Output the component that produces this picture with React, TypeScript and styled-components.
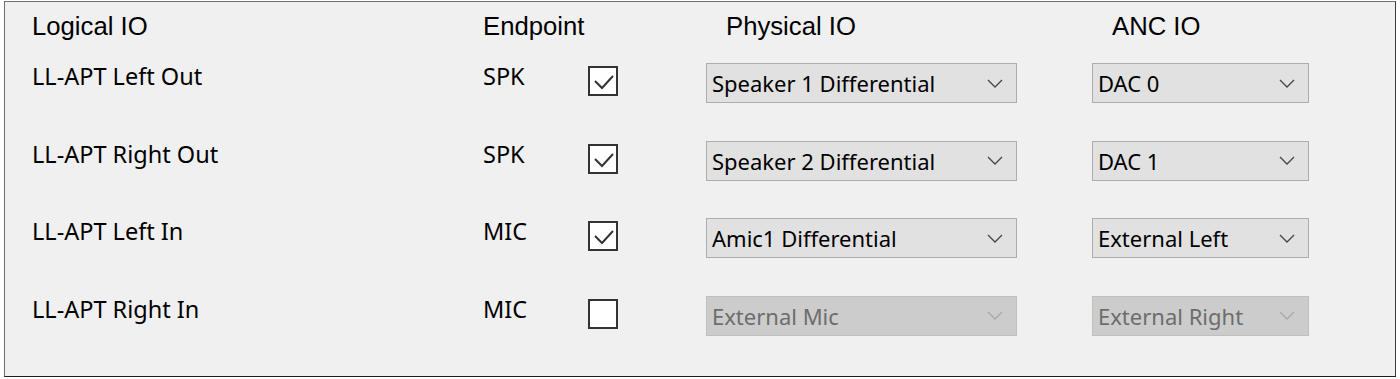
import React from 'react';
import styled, { createGlobalStyle } from 'styled-components';

type Mapping = {
    logical: string;
    endpoint: string;
    enabled: boolean;
    physical: string;
    anc: string;
}

const ROWS: Mapping[] = [
    { logical: 'LL-APT Left Out', endpoint: 'SPK', enabled: true, physical: 'Speaker 1 Differential', anc: 'DAC 0' },
    { logical: 'LL-APT Right Out', endpoint: 'SPK', enabled: true, physical: 'Speaker 2 Differential', anc: 'DAC 1' },
    { logical: 'LL-APT Left In', endpoint: 'MIC', enabled: true, physical: 'Amic1 Differential', anc: 'External Left' },
    { logical: 'LL-APT Right In', endpoint: 'MIC', enabled: false, physical: 'External Mic', anc: 'External Right' },
];

const COLUMNS = '451px 105px 118px 386px 217px';

const GlobalStyle = createGlobalStyle`
    html, body {
        margin: 0;
        padding: 0;
        background: #ffffff;
    }
`;

const Chevron = ({ disabled }: { disabled: boolean }) => (
    <svg width="16" height="9" viewBox="0 0 16 9">
        <polyline
            points="1,1 8,8 15,1"
            fill="none"
            stroke={disabled ? '#a8a8a8' : '#444444'}
            strokeWidth="1.3"
        />
    </svg>
);

const Check = () => (
    <svg width="26" height="26" viewBox="0 0 26 26">
        <polyline points="5,13 12,20 23,8" fill="none" stroke="#333333" strokeWidth="2" />
    </svg>
);

const App = () => {
    return (
        <>
            <GlobalStyle />
            <Frame>
                <HeaderRow>
                    <HeaderCell>Logical IO</HeaderCell>
                    <HeaderCell>Endpoint</HeaderCell>
                    <HeaderCell />
                    <HeaderCell $inset>Physical IO</HeaderCell>
                    <HeaderCell $inset>ANC IO</HeaderCell>
                </HeaderRow>
                <Rows>
                    {ROWS.map(row => (
                        <Row key={row.logical}>
                            <Label>{row.logical}</Label>
                            <Label>{row.endpoint}</Label>
                            <CheckBox>{row.enabled && <Check />}</CheckBox>
                            <Select $disabled={!row.enabled} $width={311}>
                                <span>{row.physical}</span>
                                <Chevron disabled={!row.enabled} />
                            </Select>
                            <Select $disabled={!row.enabled} $width={217}>
                                <span>{row.anc}</span>
                                <Chevron disabled={!row.enabled} />
                            </Select>
                        </Row>
                    ))}
                </Rows>
            </Frame>
        </>
    );
}

const Frame = styled.div`
    box-sizing: border-box;
    margin: 1px 0 0 4px;
    width: 1392px;
    height: 376px;
    background: #f0f0f0;
    border: 1px solid #6e6e6e;
    border-right-color: #3a3a3a;
    border-bottom-color: #1e1e1e;
    padding: 9px 0 0 27px;
    display: flex;
    flex-direction: column;
`;

const HeaderRow = styled.div`
    display: grid;
    grid-template-columns: ${COLUMNS};
    height: 30px;
`;

const HeaderCell = styled.div<{ $inset?: boolean }>`
    font-family: "Liberation Sans", Arial, sans-serif;
    font-size: 25.7px;
    line-height: 30px;
    color: #000000;
    white-space: nowrap;
    padding-left: ${props => props.$inset ? '20px' : '0'};
`;

const Rows = styled.div`
    display: flex;
    flex-direction: column;
    gap: 34.5px;
    margin-top: 19px;
`;

const Row = styled.div`
    display: grid;
    grid-template-columns: ${COLUMNS};
    align-items: start;
    height: 43px;
`;

const Label = styled.div`
    font-family: "Noto Sans", "Open Sans", sans-serif;
    font-size: 23.5px;
    line-height: 32px;
    color: #000000;
    white-space: nowrap;
`;

const CheckBox = styled.div`
    box-sizing: border-box;
    width: 30px;
    height: 30px;
    margin-top: 6px;
    background: #ffffff;
    border: 2px solid #333333;
    display: flex;
    align-items: center;
    justify-content: center;
`;

const Select = styled.div<{ $disabled: boolean; $width: number }>`
    box-sizing: border-box;
    width: ${props => props.$width}px;
    height: 40px;
    margin-top: 3px;
    padding: 0 13px 0 5px;
    display: flex;
    align-items: center;
    justify-content: space-between;
    background: ${props => props.$disabled ? '#cccccc' : '#e1e1e1'};
    border: 1px solid ${props => props.$disabled ? '#bfbfbf' : '#adadad'};
    font-family: "Noto Sans", "Open Sans", sans-serif;
    font-size: 22px;
    color: ${props => props.$disabled ? '#6d6d6d' : '#000000'};
    white-space: nowrap;
`;

export default App;
